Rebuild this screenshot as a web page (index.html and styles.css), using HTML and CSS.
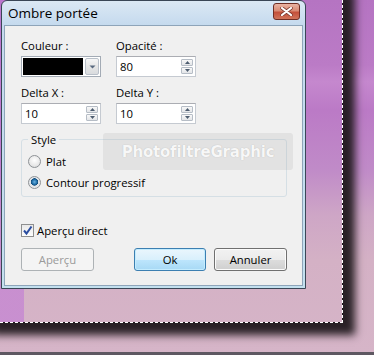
FILE: index.html
```html
<!DOCTYPE html>
<html lang="fr">
<head>
    <meta charset="UTF-8">
    <meta name="viewport" content="width=device-width, initial-scale=1.0">
    <title>Ombre portée</title>
    <link rel="stylesheet" href="styles.css">
</head>
<body>
    <div class="photo">
        <div class="canvas">
            <div class="dialog">
                <div class="titlebar">
                    <span class="title">Ombre portée</span>
                    <span class="close">
                        <svg width="13" height="9" viewBox="0 0 13 9"><path d="M2 1 L11 8 M11 1 L2 8" stroke="#7a3a30" stroke-width="3.6" stroke-linecap="round"/><path d="M2 1 L11 8 M11 1 L2 8" stroke="#fff" stroke-width="2.2" stroke-linecap="round"/></svg>
                    </span>
                </div>
                <div class="client">
                    <div class="row">
                        <div class="field">
                            <label>Couleur :</label>
                            <div class="combo">
                                <span class="swatch"></span>
                                <span class="drop"><svg width="7" height="4" viewBox="0 0 7 4"><path d="M0.5 0.5 L6.5 0.5 L3.5 3.5 Z" fill="#5a6a80"/></svg></span>
                            </div>
                        </div>
                        <div class="field">
                            <label>Opacité :</label>
                            <div class="spin">
                                <span class="value">80</span>
                                <span class="arrows">
                                    <span class="arrow"><svg width="5" height="3" viewBox="0 0 5 3"><path d="M0 3 L2.5 0 L5 3 Z" fill="#4e5d70"/></svg></span>
                                    <span class="arrow"><svg width="5" height="3" viewBox="0 0 5 3"><path d="M0 0 L2.5 3 L5 0 Z" fill="#4e5d70"/></svg></span>
                                </span>
                            </div>
                        </div>
                    </div>
                    <div class="row second">
                        <div class="field">
                            <label>Delta X :</label>
                            <div class="spin">
                                <span class="value">10</span>
                                <span class="arrows">
                                    <span class="arrow"><svg width="5" height="3" viewBox="0 0 5 3"><path d="M0 3 L2.5 0 L5 3 Z" fill="#4e5d70"/></svg></span>
                                    <span class="arrow"><svg width="5" height="3" viewBox="0 0 5 3"><path d="M0 0 L2.5 3 L5 0 Z" fill="#4e5d70"/></svg></span>
                                </span>
                            </div>
                        </div>
                        <div class="field">
                            <label>Delta Y :</label>
                            <div class="spin">
                                <span class="value">10</span>
                                <span class="arrows">
                                    <span class="arrow"><svg width="5" height="3" viewBox="0 0 5 3"><path d="M0 3 L2.5 0 L5 3 Z" fill="#4e5d70"/></svg></span>
                                    <span class="arrow"><svg width="5" height="3" viewBox="0 0 5 3"><path d="M0 0 L2.5 3 L5 0 Z" fill="#4e5d70"/></svg></span>
                                </span>
                            </div>
                        </div>
                    </div>
                    <fieldset class="group">
                        <legend>Style</legend>
                        <div class="option"><span class="radio"></span>Plat</div>
                        <div class="option"><span class="radio checked"></span>Contour progressif</div>
                    </fieldset>
                    <div class="check">
                        <span class="box"><svg width="11" height="11" viewBox="0 0 11 11"><path d="M2 5.5 L4.5 8.5 L9.5 1.5" stroke="#2a4da0" stroke-width="2" fill="none"/></svg></span>
                        Aperçu direct
                    </div>
                    <div class="buttons">
                        <button class="btn disabled">Aperçu</button>
                        <span class="spacer"></span>
                        <button class="btn default">Ok</button>
                        <button class="btn">Annuler</button>
                    </div>
                    <div class="watermark">PhotofiltreGraphic</div>
                </div>
            </div>
        </div>
    </div>
    <div class="floor"></div>
</body>
</html>
```

FILE: styles.css
```css
body {
    margin: 0;
    height: 355px;
    overflow: hidden;
    display: flex;
    flex-direction: column;
    font-family: "Open Sans", "Noto Sans", sans-serif;
    font-size: 11.3px;
    color: #000;
    background: linear-gradient(180deg, #b574c2 0, #bb7bc6 65px, #c588ce 82px, #bb7ac6 110px, #c08bc8 170px, #cea6c6 215px, #d4b1c5 260px, #d6b5c8 355px) fixed;
}
.photo {
    align-self: flex-start;
    margin: -20px 0 0 -20px;
    background-color: #211a1e;
    box-shadow: 12px 12px 8px rgba(33, 25, 30, 0.95);
}
.canvas {
    box-sizing: border-box;
    width: 363px;
    height: 343px;
    padding: 20px 0 0 20px;
    border-right: 1px dashed #fff;
    border-bottom: 1px dashed #fff;
    background:
        linear-gradient(90deg, rgba(192, 120, 214, 0.6) 0, rgba(192, 120, 214, 0.6) 24px, transparent 24px) fixed,
        linear-gradient(180deg, #b574c2 0, #bb7bc6 65px, #c588ce 82px, #bb7ac6 110px, #c08bc8 170px, #cea6c6 215px, #d4b1c5 260px, #d6b5c8 355px) fixed;
    background-clip: padding-box;
}
.dialog {
    position: relative;
    box-sizing: border-box;
    width: 305px;
    height: 289px;
    margin-left: 1px;
    border: 1px solid #3a4656;
    border-radius: 6px 6px 0 0;
    padding: 0 2px 2px;
    display: flex;
    flex-direction: column;
    background: linear-gradient(180deg, #dbe8f4 0, #c5daee 24px, #c3e0ef 100%);
}
.titlebar {
    height: 24px;
    display: flex;
    justify-content: space-between;
    align-items: flex-start;
    padding: 2px 3px 0 4px;
    box-sizing: border-box;
}
.title {
    font-size: 13.5px;
    line-height: 20px;
}
.close {
    width: 27px;
    height: 17px;
    box-sizing: border-box;
    border: 1px solid #6f2e24;
    border-radius: 3px;
    display: flex;
    align-items: center;
    justify-content: center;
    background: linear-gradient(180deg, #eab3a2 0, #d98b74 45%, #c4503a 55%, #d0745a 100%);
}
.client {
    flex: 1;
    position: relative;
    background-color: #f0f0f0;
    border: 1px solid #8ea4b9;
    padding: 12px 15px 0 16px;
}
.row {
    display: flex;
    gap: 15px;
}
.row.second {
    margin-top: 8px;
}
.field {
    width: 80px;
}
.field label {
    display: block;
    line-height: 15px;
    margin-bottom: 3px;
}
.combo {
    box-sizing: border-box;
    height: 21px;
    display: flex;
    gap: 2px;
    padding: 1px;
    border: 1px solid #a3abb5;
    background-color: #fff;
}
.swatch {
    flex: 1;
    background-color: #000;
}
.drop {
    width: 14px;
    box-sizing: border-box;
    border: 1px solid #b9c0c9;
    border-radius: 2px;
    display: flex;
    align-items: center;
    justify-content: center;
    background: linear-gradient(180deg, #f6f6f6 0, #e6e6e6 50%, #d9dbde 100%);
}
.spin {
    box-sizing: border-box;
    height: 21px;
    display: flex;
    align-items: center;
    padding-left: 3px;
    border: 1px solid #c5cad1;
    border-top-color: #abadb3;
    background-color: #fff;
}
.value {
    flex: 1;
    line-height: 15px;
}
.arrows {
    display: flex;
    flex-direction: column;
    gap: 1px;
    margin-right: 2px;
}
.arrow {
    width: 12px;
    height: 7px;
    box-sizing: border-box;
    border: 1px solid #b6bdc6;
    border-radius: 1px;
    display: flex;
    align-items: center;
    justify-content: center;
    background: linear-gradient(180deg, #f8f8f8 0, #e3e5e8 100%);
}
.group {
    margin: 8px 0 0;
    padding: 4px 0 3px 6px;
    border: 1px solid #d5dfe5;
    border-radius: 3px;
}
.group legend {
    padding: 0 3px;
    line-height: 15px;
}
.option {
    height: 21px;
    display: flex;
    align-items: center;
    gap: 5px;
}
.radio {
    width: 13px;
    height: 13px;
    box-sizing: border-box;
    border-radius: 50%;
    border: 1px solid #8e9296;
    background: radial-gradient(circle at 50% 40%, #ffffff 0, #e8e8e8 60%, #cfd2d5 100%);
}
.radio.checked {
    background: radial-gradient(circle at 50% 45%, #6db3e2 0, #1f6ea8 30%, #134c7a 42%, #dfe3e7 48%, #f4f4f4 100%);
}
.check {
    margin-top: 26px;
    height: 15px;
    display: flex;
    align-items: center;
    gap: 3px;
}
.box {
    width: 13px;
    height: 13px;
    box-sizing: border-box;
    border: 1px solid #8e8f8f;
    display: flex;
    align-items: center;
    justify-content: center;
    background: linear-gradient(180deg, #e9e9e9 0, #fdfdfd 100%);
}
.buttons {
    margin-top: 10px;
    display: flex;
    gap: 8px;
}
.spacer {
    flex: 1;
}
.btn {
    width: 73px;
    height: 23px;
    padding: 0;
    font-family: inherit;
    font-size: 11.3px;
    color: #000;
    border: 1px solid #707070;
    border-radius: 3px;
    background: linear-gradient(180deg, #f2f2f2 0, #ebebeb 50%, #dddddd 50%, #cfcfcf 100%);
    box-shadow: inset 0 0 0 1px #fbfbfb;
}
.btn.default {
    width: 72px;
    border-color: #3c7fb1;
    background: linear-gradient(180deg, #eaf6fd 0, #d9f0fc 50%, #bee6fd 50%, #a7d9f5 100%);
    box-shadow: inset 0 0 0 1px #c4ecfe;
}
.btn.disabled {
    color: #9a9a9a;
    border-color: #adb2b5;
    background: #f4f4f4;
    box-shadow: none;
}
.watermark {
    position: absolute;
    left: 98px;
    top: 107px;
    width: 190px;
    height: 37px;
    border-radius: 3px;
    background-color: rgba(170, 170, 170, 0.2);
    display: flex;
    align-items: center;
    justify-content: center;
    font-family: "DejaVu Sans", sans-serif;
    font-weight: bold;
    font-size: 15px;
    letter-spacing: -0.2px;
    color: #f7f7f7;
    text-shadow: 0 0 1px #b0b0b0;
}
.floor {
    margin-top: auto;
    height: 3px;
    background-color: #5e5862;
}
```
